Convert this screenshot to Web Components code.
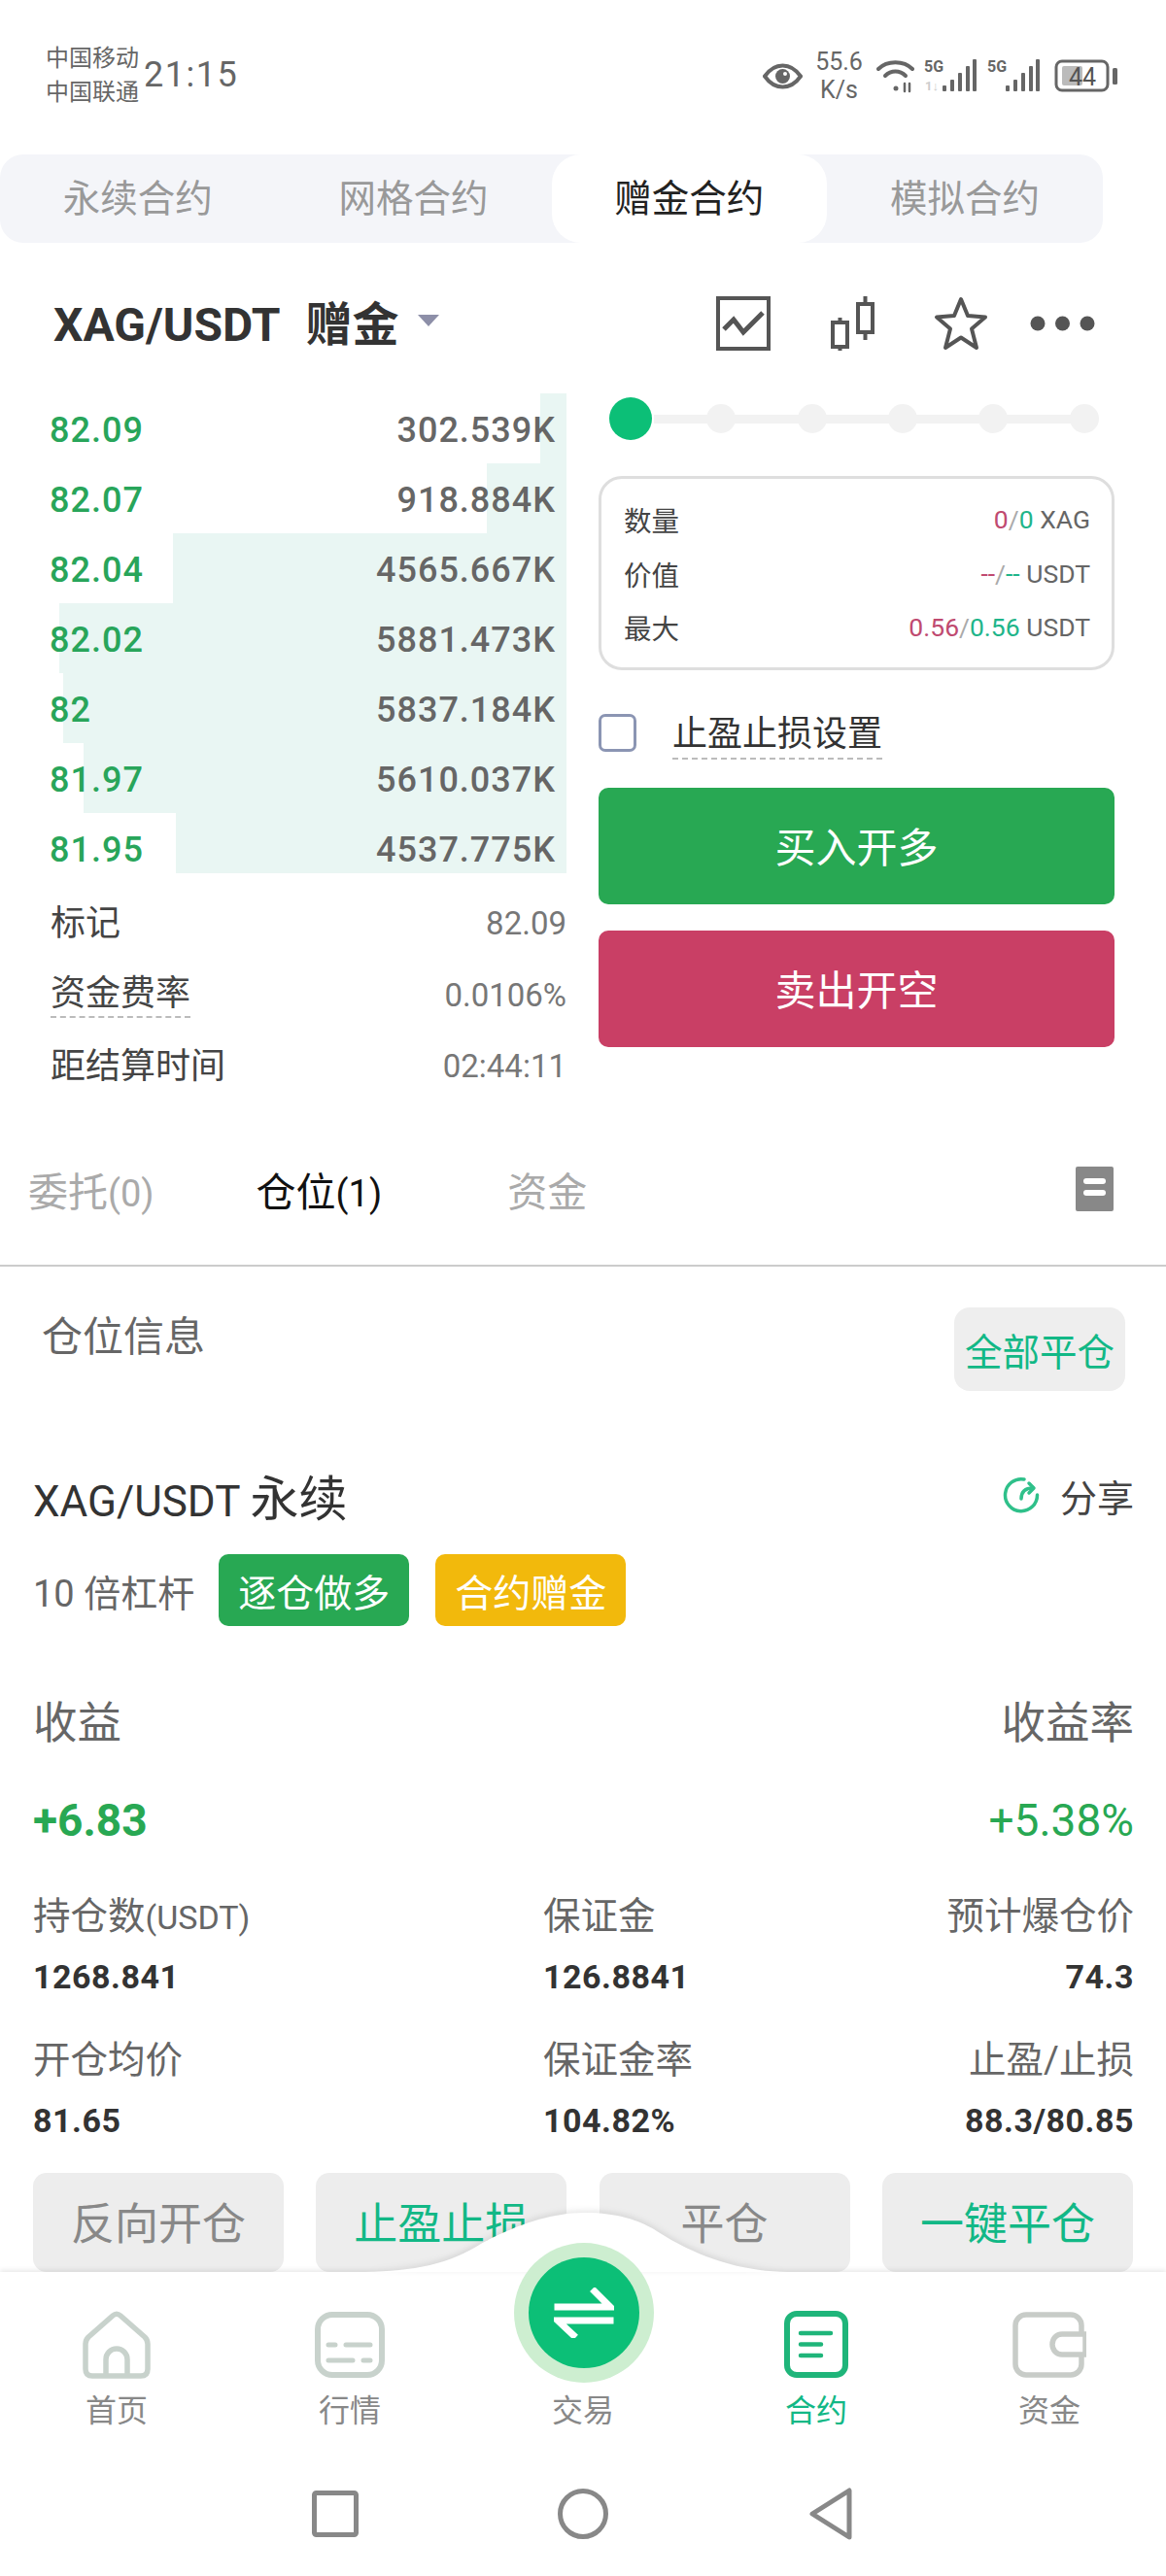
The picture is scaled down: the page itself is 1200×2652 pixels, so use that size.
<!DOCTYPE html>
<html lang="zh">
<head>
<meta charset="utf-8">
<title>contract</title>
<style>
  html, body { margin: 0; padding: 0; background: #fff; }
  body {
    width: 1200px; height: 2652px; overflow: hidden;
    font-family: Roboto, "Noto Sans CJK SC", sans-serif;
    color: #333;
  }
</style>
</head>
<body>
<status-bar></status-bar>
<contract-tabs></contract-tabs>
<pair-header></pair-header>
<trade-area>
  <order-book slot="book"></order-book>
  <trade-panel slot="panel"></trade-panel>
</trade-area>
<position-tabs></position-tabs>
<position-card></position-card>
<bottom-nav></bottom-nav>
<system-nav></system-nav>

<script>
//STATUS BAR
class StatusBar extends HTMLElement {
  constructor(){
    super();
    this.attachShadow({mode:"open"});
    const sim = (dim) => `
      <svg width="55" height="36" viewBox="0 0 55 36">
        <text x="0" y="14" font-size="16" font-weight="700" fill="#666" font-family="Roboto">5G</text>
        ${dim ? '<text x="1" y="33" font-size="13" font-weight="700" fill="#ccc" font-family="Roboto">1↓</text>' : ''}
        <rect x="19" y="28" width="4" height="6" rx="1" fill="#666"/>
        <rect x="27" y="22" width="4" height="12" rx="1" fill="#666"/>
        <rect x="35" y="15" width="4" height="19" rx="1" fill="#666"/>
        <rect x="43" y="8" width="4" height="26" rx="1" fill="#666"/>
        <rect x="50" y="1" width="4" height="33" rx="1" fill="#666"/>
      </svg>`;
    this.shadowRoot.innerHTML = `
    <style>
      :host { display: flex; height: 159px; box-sizing: border-box; padding: 40px 49px 0 47px; justify-content: space-between; color: #666; }
      .left { display: flex; align-items: center; height: 76px; }
      .carrier { font-size: 24px; line-height: 35px; color: #666; }
      .time { font-size: 36px; letter-spacing: 1.500px; margin: -2px 0 0 5px; color: #666; }
      .right { display: flex; align-items: center; height: 76px; }
      .speed { font-size: 25px; line-height: 29px; text-align: center; width: 51px; margin: 0 13px 0 12px; white-space: nowrap; }
      svg { display: block; flex: none; }
    </style>
    <div class="left">
      <div class="carrier">中国移动<br>中国联通</div>
      <div class="time">21:15</div>
    </div>
    <div class="right">
      <svg width="41" height="27" viewBox="0 0 41 27">
        <path d="M2 13.5C8 5 14 2.5 20.500 2.500S33 5 39 13.500C33 22 27 24.500 20.500 24.500S8 22 2 13.500Z" fill="none" stroke="#666" stroke-width="4"/>
        <circle cx="20.500" cy="13.500" r="7.500" fill="#666"/>
        <circle cx="23" cy="11" r="2" fill="#fff"/>
      </svg>
      <div class="speed">55.6<br>K/s</div>
      <svg width="40" height="36" viewBox="0 0 40 36" fill="none" stroke="#666" stroke-width="4" stroke-linecap="round">
        <path d="M2 11C11 2 28 2 37 11"/>
        <path d="M9 18C15 12 24 12 30 18"/>
        <circle cx="20" cy="31" r="2.500" fill="#666" stroke="none"/>
        <path d="M29 26v8M34 26v8" stroke-width="2.500"/>
      </svg>
      <span style="width:9px"></span>
      ${sim(true)}
      <span style="width:10px"></span>
      ${sim(false)}
      <span style="width:14px"></span>
      <svg width="66" height="36" viewBox="0 0 66 36">
        <rect x="2" y="3" width="53" height="30" rx="6" fill="none" stroke="#666" stroke-width="3"/>
        <rect x="8" y="8" width="21" height="20" rx="2" fill="#bbb"/>
        <text x="29" y="28" font-size="25" fill="#555" text-anchor="middle" font-family="Roboto">44</text>
        <rect x="60" y="10" width="5" height="17" rx="1.500" fill="#666"/>
      </svg>
    </div>`;
  }
}
customElements.define("status-bar", StatusBar);

//TOP TABS
class ContractTabs extends HTMLElement {
  constructor(){
    super();
    this.attachShadow({mode:"open"});
    this.shadowRoot.innerHTML = `
    <style>
      :host { display: flex; width: 1135px; height: 91px; background: #f4f5f9; border-radius: 24px; }
      div { flex: 1; display: flex; align-items: center; justify-content: center; font-size: 38.500px; color: #999; border-radius: 30px; box-sizing: border-box; padding-bottom: 8px; }
      .on { background: #fff; color: #222; }
    </style>
    <div>永续合约</div><div>网格合约</div><div class="on">赠金合约</div><div>模拟合约</div>`;
  }
}
customElements.define("contract-tabs", ContractTabs);

//PAIR HEADER WITH TOOL ICONS
class PairHeader extends HTMLElement {
  constructor(){
    super();
    this.attachShadow({mode:"open"});
    this.shadowRoot.innerHTML = `
    <style>
      :host { display: flex; height: 155px; box-sizing: border-box; padding: 52px 73px 47px 55px; align-items: center; }
      .name { font-size: 48px; font-weight: 700; color: #333; white-space: nowrap; }
      .cn { margin-left: 26px; font-size: 48px; }
      .caret { width: 0; height: 0; border: 11px solid transparent; border-top: 12px solid #8d8fa8; border-bottom: 0; margin-left: 20px; }
      .tools { margin-left: auto; display: flex; align-items: center; margin-top: 6px; }
      svg { display: block; flex: none; }
    </style>
    <div class="name">XAG/USDT<span class="cn">赠金</span></div>
    <div class="caret"></div>
    <div class="tools">
      <svg width="56" height="56" viewBox="0 0 56 56" fill="none" stroke="#555" stroke-width="4">
        <rect x="2" y="2" width="52" height="52"/>
        <path d="M8 34L18 24L28 37L48 17" stroke-width="5"/>
      </svg>
      <svg style="margin-left:62px" width="46" height="56" viewBox="0 0 46 56" fill="none" stroke="#555" stroke-width="4">
        <rect x="2" y="27" width="15" height="25"/><path d="M9.500 22v5M9.500 52v4"/>
        <rect x="28" y="8" width="15" height="29"/><path d="M35.500 0v8M35.500 37v8"/>
      </svg>
      <svg style="margin-left:60px" width="56" height="56" viewBox="0 0 56 56" fill="none" stroke="#555" stroke-width="4" stroke-linejoin="round">
        <path d="M28 3L35 20L53 21.500L39 33.500L44 53L28 42.500L12 53L17 33.500L3 21.500L21 20Z"/>
      </svg>
      <svg style="margin-left:43px" width="67" height="16" viewBox="0 0 67 16" fill="#555">
        <circle cx="8" cy="8" r="7.500"/><circle cx="33.500" cy="8" r="7.500"/><circle cx="59" cy="8" r="7.500"/>
      </svg>
    </div>`;
  }
}
customElements.define("pair-header", PairHeader);

//TWO COLUMN AREA
class TradeArea extends HTMLElement {
  constructor(){
    super();
    this.attachShadow({mode:"open"});
    this.shadowRoot.innerHTML = `
    <style>
      :host { display: grid; grid-template-columns: 583px 531px; column-gap: 33px; height: 730px; align-items: start; }
    </style>
    <slot name="book"></slot>
    <slot name="panel"></slot>`;
  }
}
customElements.define("trade-area", TradeArea);

//ORDER BOOK
const BOOK_ROWS = [
  ["82.09","302.539K",556],
  ["82.07","918.884K",501],
  ["82.04","4565.667K",178],
  ["82.02","5881.473K",61],
  ["82","5837.184K",65],
  ["81.97","5610.037K",86],
  ["81.95","4537.775K",181]
];
class OrderBook extends HTMLElement {
  constructor(){
    super();
    this.attachShadow({mode:"open"});
    const rows = BOOK_ROWS.map((r,i) => `
      <div class="row">
        <i class="bar" style="left:${r[2]}px;${i===6?'bottom:10px':''}"></i>
        <span class="price">${r[0]}</span><span class="qty">${r[1]}</span>
      </div>`).join("");
    this.shadowRoot.innerHTML = `
    <style>
      :host { display: block; }
      .row { position: relative; height: 72px; display: flex; justify-content: space-between; align-items: center; padding: 0 11px 0 51px; font-size: 36px; letter-spacing: 1px; }
      .bar { position: absolute; top: 0; bottom: 0; right: 0; background: #e9f6f3; }
      .price, .qty { position: relative; top: 2px; }
      .price { color: #28a55a; font-weight: 500; }
      .qty { color: #666; font-weight: 500; }
      .info { height: 73.500px; display: flex; justify-content: space-between; align-items: center; padding-left: 52px; position: relative; top: 1px; }
      .info b { font-weight: 400; font-size: 36px; color: #444; line-height: 46px; }
      .info span { font-size: 33px; color: #777; }
      .dash { border-bottom: 2px dashed #bbb; }
      .infos { margin-top: 4px; }
    </style>
    ${rows}
    <div class="infos">
      <div class="info"><b>标记</b><span>82.09</span></div>
      <div class="info"><b class="dash">资金费率</b><span>0.0106%</span></div>
      <div class="info"><b>距结算时间</b><span>02:44:11</span></div>
    </div>`;
  }
}
customElements.define("order-book", OrderBook);

//RIGHT SIDE PANEL
class TradePanel extends HTMLElement {
  constructor(){
    super();
    this.attachShadow({mode:"open"});
    this.shadowRoot.innerHTML = `
    <style>
      :host { display: block; padding-top: 4px; }
      .slider { position: relative; display: grid; grid-template-columns: repeat(6, 93.300px); justify-items: center; align-items: center; height: 44px; margin-left: -13.500px; }
      .slider::before { content: ""; position: absolute; left: 70px; right: 40px; top: 18px; height: 9px; background: #f2f2f2; }
      .slider i { position: relative; width: 30px; height: 30px; border-radius: 50%; background: #f2f2f2; }
      .slider i.on { width: 44px; height: 44px; background: #0cbf77; }
      .box { box-sizing: border-box; height: 200px; margin-top: 37px; border: 3px solid #dedede; border-radius: 24px; padding: 0 22px 0 23px; display: flex; flex-direction: column; justify-content: center; }
      .line { height: 55.500px; display: flex; justify-content: space-between; align-items: center; font-size: 28.500px; color: #444; }
      .val { font-size: 26.500px; color: #666; }
      .r { color: #c04a70; } .g { color: #1fb58a; } .s { color: #aaa; }
      .check { display: flex; align-items: center; margin-top: 37px; height: 54px; }
      .check i { box-sizing: border-box; width: 39px; height: 39px; border: 3px solid #8b95b3; border-radius: 7px; }
      .check span { margin-left: 37px; font-size: 36px; color: #333; line-height: 47px; border-bottom: 2px dashed #bbb; position: relative; top: 3px; }
      .btn { height: 120px; border-radius: 10px; display: flex; align-items: center; justify-content: center; color: #fff; font-size: 42px; box-sizing: border-box; padding-bottom: 3px; }
      .buy { background: #28a853; margin-top: 30px; }
      .sell { background: #c93f65; margin-top: 27px; }
    </style>
    <div class="slider"><i class="on"></i><i></i><i></i><i></i><i></i><i></i></div>
    <div class="box">
      <div class="line"><span>数量</span><span class="val"><span class="r">0</span><span class="s">/</span><span class="g">0</span> XAG</span></div>
      <div class="line"><span>价值</span><span class="val"><span class="r">--</span><span class="s">/</span><span class="g">--</span> USDT</span></div>
      <div class="line"><span>最大</span><span class="val"><span class="r">0.56</span><span class="s">/</span><span class="g">0.56</span> USDT</span></div>
    </div>
    <div class="check"><i></i><span>止盈止损设置</span></div>
    <div class="btn buy">买入开多</div>
    <div class="btn sell">卖出开空</div>`;
  }
}
customElements.define("trade-panel", TradePanel);

//ORDER / POSITION TABS
class PositionTabs extends HTMLElement {
  constructor(){
    super();
    this.attachShadow({mode:"open"});
    this.shadowRoot.innerHTML = `
    <style>
      :host { display: flex; align-items: center; box-sizing: border-box; height: 169px; padding: 10px 54px 0 29px; border-bottom: 2px solid #ccc; font-size: 41px; color: #aaa; }
      small { font-size: 38px; }
      .on { color: #111; margin-left: 105px; }
      .third { margin-left: 129px; }
      svg { margin-left: auto; display: block; }
    </style>
    <div>委托<small>(0)</small></div>
    <div class="on">仓位<small>(1)</small></div>
    <div class="third">资金</div>
    <svg width="39" height="46" viewBox="0 0 39 46">
      <rect width="39" height="46" rx="2" fill="#888"/>
      <rect x="8" y="12" width="23" height="6" rx="3" fill="#fff"/>
      <rect x="8" y="24" width="23" height="6" rx="3" fill="#fff"/>
    </svg>`;
  }
}
customElements.define("position-tabs", PositionTabs);

//POSITION CARD
class PositionCard extends HTMLElement {
  constructor(){
    super();
    this.attachShadow({mode:"open"});
    this.shadowRoot.innerHTML = `
    <style>
      :host { display: block; box-sizing: border-box; height: 1035px; padding: 42px 33px 0 34px; }
      .head { display: flex; justify-content: space-between; align-items: flex-start; padding-left: 9px; height: 86px; }
      .head span { font-size: 42px; color: #666; margin-top: -4px; }
      .closeall { display: flex; align-items: center; justify-content: center; box-sizing: border-box; width: 176px; height: 86px; background: #eee; border-radius: 16px; font-size: 38.500px; color: #12b886; margin-right: 9px; }
      .title { display: flex; justify-content: space-between; align-items: center; margin-top: 77px; height: 60px; }
      .title .sym { font-size: 44px; color: #333; }
      .title .sym b { font-weight: 400; font-size: 50px; }
      .share { display: flex; align-items: center; font-size: 38px; color: #444; }
      .share svg { margin-right: 20px; display: block; }
      .tags { display: flex; align-items: center; margin-top: 31px; height: 74px; font-size: 38px; color: #666; }
      .tag { display: flex; align-items: center; justify-content: center; width: 196px; height: 74px; border-radius: 10px; color: #fff; font-size: 39px; }
      .tag.g { background: #28a853; margin-left: 25px; }
      .tag.y { background: #f2b90c; margin-left: 27px; }
      .two { display: flex; justify-content: space-between; }
      .lab { font-size: 45.500px; color: #666; }
      .num1 { font-size: 46px; font-weight: 700; color: #28a853; }
      .num2 { font-size: 46px; color: #28a853; }
      .grid { display: grid; grid-template-columns: 525px 1fr auto; margin-top: 40px; row-gap: 0; }
      .k { font-size: 38.500px; color: #666; height: 63px; line-height: 63px; }
      .k small { font-size: 34px; }
      .v { font-size: 34px; font-weight: 700; color: #333; height: 62px; line-height: 62px; margin-bottom: 23px; letter-spacing: .5px; }
      .end { text-align: right; }
      .acts { display: grid; grid-template-columns: repeat(4, 258px); column-gap: 33.300px; margin-top: 0; }
      .acts div { box-sizing: border-box; height: 102px; padding-bottom: 4px; background: #ededed; border-radius: 14px; display: flex; align-items: center; justify-content: center; font-size: 45px; color: #888; }
      .acts .g { color: #12b886; }
    </style>
    <div class="head"><span>仓位信息</span><div class="closeall">全部平仓</div></div>
    <div class="title">
      <div class="sym">XAG/USDT <b>永续</b></div>
      <div class="share">
        <svg width="39" height="40" viewBox="0 0 39 40" fill="none" stroke="#2fc08a" stroke-width="3.500" stroke-linecap="round" stroke-linejoin="round">
          <path d="M22 4A16.500 16.500 0 1 0 35.500 20"/>
          <path d="M19 24C19 17 23 13 31 13"/>
          <path d="M27 8L32 13L27 18"/>
        </svg>
        分享
      </div>
    </div>
    <div class="tags">10 倍杠杆<div class="tag g">逐仓做多</div><div class="tag y">合约赠金</div></div>
    <div class="two" style="margin-top:63px"><span class="lab">收益</span><span class="lab">收益率</span></div>
    <div class="two" style="margin-top:44px;align-items:center"><span class="num1">+6.83</span><span class="num2">+5.38%</span></div>
    <div class="grid">
      <div class="k">持仓数<small>(USDT)</small></div><div class="k">保证金</div><div class="k end">预计爆仓价</div>
      <div class="v">1268.841</div><div class="v">126.8841</div><div class="v end">74.3</div>
      <div class="k">开仓均价</div><div class="k">保证金率</div><div class="k end">止盈/止损</div>
      <div class="v">81.65</div><div class="v">104.82%</div><div class="v end">88.3/80.85</div>
    </div>
    <div class="acts">
      <div>反向开仓</div><div class="g">止盈止损</div><div>平仓</div><div class="g">一键平仓</div>
    </div>`;
  }
}
customElements.define("position-card", PositionCard);

//BOTTOM NAV
class BottomNav extends HTMLElement {
  constructor(){
    super();
    this.attachShadow({mode:"open"});
    this.shadowRoot.innerHTML = `
    <style>
      :host { display: flex; position: relative; box-sizing: border-box; height: 218px; padding-top: 40px; background: #fff; box-shadow: 0 -2px 5px rgba(0,0,0,.09); }
      .hump { position: absolute; left: 367px; top: -61px; filter: drop-shadow(0 -2px 3px rgba(0,0,0,.10)); }
      .cell { flex: 1; position: relative; display: flex; flex-direction: column; align-items: center; font-size: 32px; color: #888; }
      .cell .ico { height: 70px; display: flex; align-items: center; justify-content: center; margin-bottom: 10px; }
      .cell span { line-height: 46px; }
      .on { color: #12b886; }
      .swap { position: absolute; left: 49px; top: -70px; width: 144px; height: 144px; border-radius: 50%; background: #cdeed0; display: flex; align-items: center; justify-content: center; }
      .swap i { display: flex; align-items: center; justify-content: center; width: 114px; height: 114px; border-radius: 50%; background: #0cbf77; }
      svg { display: block; }
    </style>
    <svg class="hump" width="444" height="62" viewBox="0 0 444 62"><path d="M0 61C50 61 90 55 123 35C145 22 190 0 234 0C270 0 290 8 306 17C330 33 380 61 444 61Z" fill="#fff"/></svg>
    <div class="cell">
      <div class="ico"><svg width="70" height="70" viewBox="0 0 70 70" fill="none" stroke="#c8d2cc" stroke-width="5.500" stroke-linejoin="round">
        <path d="M31 5Q35 1.500 39 5L64 27Q67 30 67 34V60Q67 67 60 67H10Q3 67 3 60V34Q3 30 6 27Z"/>
        <path d="M24 67V50A11 11 0 0 1 46 50V67"/>
      </svg></div><span>首页</span>
    </div>
    <div class="cell">
      <div class="ico"><svg width="72" height="68" viewBox="0 0 72 68" fill="none" stroke="#c8d2cc" stroke-width="6" stroke-linecap="round">
        <rect x="3" y="3" width="66" height="62" rx="15"/>
        <path d="M14 34H21M32 34H57M14 50H39M50 50H57" stroke-width="5"/>
      </svg></div><span>行情</span>
    </div>
    <div class="cell">
      <div class="swap"><i><svg width="62" height="52" viewBox="0 0 62 52" fill="none" stroke="#fff" stroke-width="7" stroke-linecap="square">
        <path d="M4 20H58L42 4"/><path d="M58 34H4L20 49"/>
      </svg></i></div>
      <div class="ico"></div><span>交易</span>
    </div>
    <div class="cell on">
      <div class="ico"><svg width="66" height="70" viewBox="0 0 66 70" fill="none" stroke="#1fb57a" stroke-width="6" stroke-linecap="round">
        <rect x="3" y="3" width="60" height="63" rx="10"/>
        <path d="M17 23H48M17 34.500H38M17 46H38" stroke-width="4.500"/>
      </svg></div><span>合约</span>
    </div>
    <div class="cell">
      <div class="ico"><svg width="76" height="68" viewBox="0 0 76 68" fill="none" stroke="#c8ccc8" stroke-width="5.500">
        <path d="M71 23V14C71 8 66 3 60 3H14C8 3 3 8 3 14V54C3 60 8 65 14 65H60C66 65 71 60 71 54V45"/>
        <path d="M75 23H51C45 23 41 28 41 33.500S45 44 51 44H75Z"/>
      </svg></div><span>资金</span>
    </div>`;
  }
}
customElements.define("bottom-nav", BottomNav);

//ANDROID NAV
class SystemNav extends HTMLElement {
  constructor(){
    super();
    this.attachShadow({mode:"open"});
    this.shadowRoot.innerHTML = `
    <style>
      :host { display: flex; justify-content: center; align-items: center; height: 62px; padding-bottom: 33px; background: #fff; position: relative; }
      div { width: 255px; display: flex; justify-content: center; }
      svg { display: block; }
    </style>
    <div><svg width="48" height="48" viewBox="0 0 48 48"><rect x="2.500" y="2.500" width="43" height="43" rx="2" fill="none" stroke="#888" stroke-width="5"/></svg></div>
    <div><svg width="52" height="52" viewBox="0 0 52 52"><circle cx="26" cy="26" r="23.500" fill="none" stroke="#888" stroke-width="5"/></svg></div>
    <div><svg width="46" height="54" viewBox="0 0 46 54"><path d="M42 3V51L4 27Z" fill="none" stroke="#888" stroke-width="5" stroke-linejoin="round"/></svg></div>`;
  }
}
customElements.define("system-nav", SystemNav);
</script>
</body>
</html>
